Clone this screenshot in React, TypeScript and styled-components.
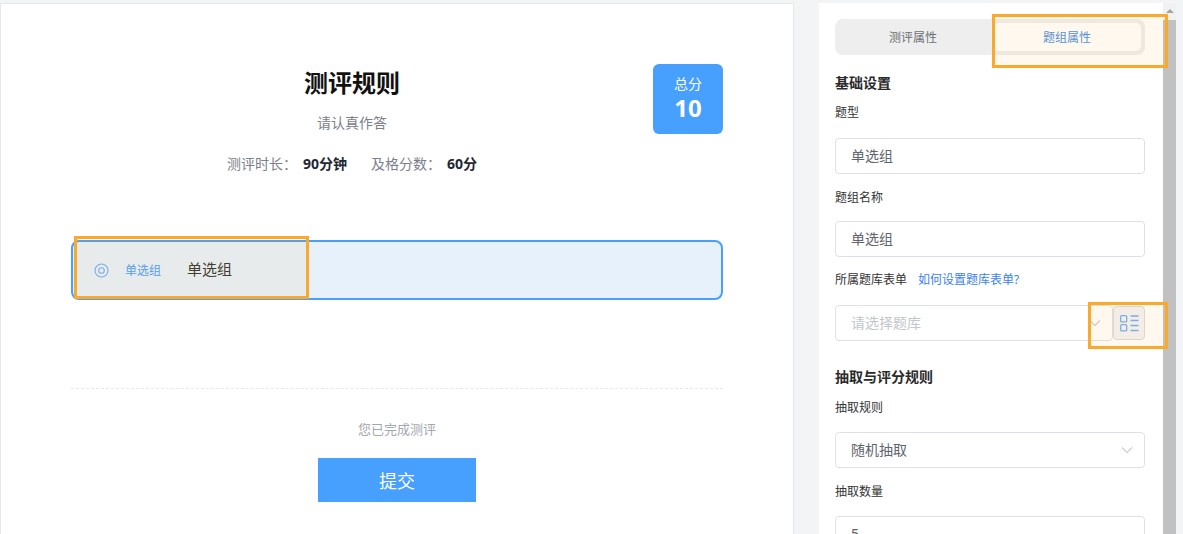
import React from "react";
import styled, { createGlobalStyle } from "styled-components";

const Global = createGlobalStyle`
  html, body { margin: 0; padding: 0; background: #f3f4f6; }
  * { box-sizing: border-box; }
  body { font-family: "Noto Sans", "Noto Sans CJK SC", sans-serif; overflow: hidden; }
`;

const Page = styled.div`
  position: relative;
  width: 1183px;
  height: 534px;
  overflow: hidden;
  display: flex;
  align-items: stretch;
  padding-top: 3px;
  background: #f3f4f6;
`;

const Preview = styled.main`
  width: 794px;
  margin-right: 25px;
  flex: none;
  background: #fff;
  border: 1px solid #e6e7ea;
  border-bottom: none;
  padding: 60px 70px 0;
`;

const Header = styled.header`
  display: flex;
  gap: 20px;
  height: 70px;
`;

const HeaderText = styled.div`
  flex: 1;
  text-align: center;
`;

const Title = styled.h1`
  margin: 2px 0 0;
  font-size: 24px;
  line-height: 34px;
  font-weight: 700;
  color: #111;
`;

const Subtitle = styled.p`
  margin: 13px 0 0;
  font-size: 14px;
  line-height: 20px;
  color: #7b808a;
`;

const Score = styled.div`
  width: 70px;
  height: 70px;
  flex: none;
  border-radius: 6px;
  background: #479ffe;
  color: #fff;
  display: flex;
  flex-direction: column;
  align-items: center;
  padding-top: 10px;
`;

const ScoreLabel = styled.span`
  font-size: 14px;
  line-height: 20px;
`;

const ScoreValue = styled.span`
  font-size: 24px;
  line-height: 28px;
  font-weight: 700;
`;

const InfoRow = styled.div`
  display: flex;
  justify-content: center;
  gap: 24px;
  width: 562px;
  margin-top: 20px;
  font-size: 14px;
  line-height: 20px;
`;

const InfoItem = styled.span`
  display: flex;
  gap: 6px;
  color: #7b808a;
`;

const InfoValue = styled.b`
  color: #1f2733;
  font-weight: 700;
`;

const QuestionRow = styled.div`
  margin-top: 66px;
  height: 60px;
  border: 2px solid #479ffe;
  border-radius: 8px;
  background: #e6f1fc;
  display: flex;
  align-items: center;
  padding-left: 21px;
`;

const TypeTag = styled.span`
  margin-left: 16px;
  width: 62px;
  font-size: 12px;
  color: #479ffe;
`;

const QuestionName = styled.span`
  font-size: 15px;
  padding-bottom: 3px;
  color: #333;
`;

const Divider = styled.hr`
  margin: 88px 0 0;
  border: none;
  border-top: 1px dashed #e6e8eb;
`;

const Footer = styled.div`
  display: flex;
  flex-direction: column;
  align-items: center;
`;

const Done = styled.p`
  margin: 30px 0 0;
  font-size: 13px;
  line-height: 20px;
  color: #a3a7b0;
`;

const Submit = styled.button`
  margin-top: 19px;
  width: 158px;
  height: 44px;
  border: none;
  background: #479ffe;
  color: #fff;
  font-family: inherit;
  font-size: 18px;
  padding: 0;
`;

const Side = styled.aside`
  width: 344px;
  flex: none;
  background: #fff;
  padding: 16px 18px 0 16px;
`;

const Tabs = styled.div`
  display: flex;
  height: 36px;
  padding: 4px;
  border-radius: 8px;
  background: #eeeeee;
`;

const Tab = styled.div<{ $active?: boolean }>`
  display: flex;
  align-items: center;
  justify-content: center;
  border-radius: 5px;
  font-size: 12px;
  ${(p) => (p.$active ? "width: 148px; flex: none;" : "flex: 1; padding-right: 6px;")}
  background: ${(p) => (p.$active ? "#fff" : "transparent")};
  color: ${(p) => (p.$active ? "#4a90e8" : "#6b6f76")};
`;

const SectionTitle = styled.h2<{ $top: number }>`
  margin: ${(p) => p.$top}px 0 0;
  font-size: 14px;
  line-height: 20px;
  font-weight: 700;
  color: #2a2a2a;
`;

const Label = styled.div<{ $top: number }>`
  margin-top: ${(p) => p.$top}px;
  padding-top: 2px;
  font-size: 12px;
  line-height: 16px;
  color: #333;
  display: flex;
  gap: 11px;
`;

const HelpLink = styled.a`
  color: #3b7ff5;
`;

const Field = styled.div<{ $top: number }>`
  margin-top: ${(p) => p.$top}px;
  height: 36px;
  flex: 1;
  min-width: 0;
  border: 1px solid #dfe1e8;
  border-radius: 4px;
  display: flex;
  align-items: center;
  justify-content: space-between;
  padding: 0 10px 2px 15px;
  font-size: 14px;
  color: #60646c;
`;

const Placeholder = styled.span`
  color: #c3c6cc;
`;

const FieldGroup = styled.div`
  display: flex;
  margin-top: 17px;
  height: 36px;
`;

const IconButton = styled.button`
  width: 32px;
  flex: none;
  height: 34px;
  margin-top: 1px;
  padding: 0;
  border: 1px solid #d8dae0;
  border-radius: 4px;
  background: #f3f4f7;
  display: flex;
  align-items: center;
  justify-content: center;
`;

const Scrollbar = styled.div`
  width: 13px;
  flex: none;
  background: #f1f1f1;
  display: flex;
  flex-direction: column;
  align-items: center;
`;

const ScrollArrow = styled.div`
  width: 0;
  height: 0;
  margin-top: 6px;
  border-left: 4px solid transparent;
  border-right: 4px solid transparent;
  border-bottom: 4px solid #a3a3a3;
`;

const ScrollThumb = styled.div`
  width: 100%;
  flex: 1;
  margin-top: 7px;
  background: #c1c1c1;
`;

const Highlight = styled.div<{ $x: number; $y: number; $w: number; $h: number }>`
  position: absolute;
  left: ${(p) => p.$x}px;
  top: ${(p) => p.$y}px;
  width: ${(p) => p.$w}px;
  height: ${(p) => p.$h}px;
  border: 3px solid #faa92a;
  background: rgba(250, 170, 40, 0.08);
  pointer-events: none;
`;

const Chevron = () => (
  <svg width="14" height="14" viewBox="0 0 14 14" fill="none">
    <path d="M2 5.500 7 10.500 12 5.500" stroke="#c9ccd2" strokeWidth="1.1" />
  </svg>
);

const TargetIcon = () => (
  <svg width="15" height="15" viewBox="0 0 15 15" fill="none" stroke="#6eb0f6">
    <circle cx="7.5" cy="7.5" r="6.5" strokeWidth="1.1" />
    <circle cx="7.5" cy="7.5" r="2.8" strokeWidth="1.1" />
  </svg>
);

const ListIcon = () => (
  <svg width="19" height="17" viewBox="0 0 19 17" fill="none" stroke="#6eb0f6" strokeWidth="1.3">
    <rect x="0.7" y="0.7" width="6" height="6.200" rx="1" />
    <rect x="0.7" y="9.700" width="6" height="6.200" rx="1" />
    <path d="M10.500 1h8M10.500 5.500h8M10.500 10.500h8M10.500 15.500h8" />
  </svg>
);

export default function App() {
  return (
    <Page>
      <Global />
      <Preview>
        <Header>
          <HeaderText>
            <Title>测评规则</Title>
            <Subtitle>请认真作答</Subtitle>
          </HeaderText>
          <Score>
            <ScoreLabel>总分</ScoreLabel>
            <ScoreValue>10</ScoreValue>
          </Score>
        </Header>
        <InfoRow>
          <InfoItem>
            <span>测评时长：</span>
            <InfoValue>90分钟</InfoValue>
          </InfoItem>
          <InfoItem>
            <span>及格分数：</span>
            <InfoValue>60分</InfoValue>
          </InfoItem>
        </InfoRow>
        <QuestionRow>
          <TargetIcon />
          <TypeTag>单选组</TypeTag>
          <QuestionName>单选组</QuestionName>
        </QuestionRow>
        <Divider />
        <Footer>
          <Done>您已完成测评</Done>
          <Submit>提交</Submit>
        </Footer>
      </Preview>
      <Side>
        <Tabs>
          <Tab>测评属性</Tab>
          <Tab $active>题组属性</Tab>
        </Tabs>
        <SectionTitle $top={18}>基础设置</SectionTitle>
        <Label $top={10}>题型</Label>
        <Field $top={17}>单选组</Field>
        <Label $top={14}>题组名称</Label>
        <Field $top={15}>单选组</Field>
        <Label $top={13}>
          <span>所属题库表单</span>
          <HelpLink>如何设置题库表单?</HelpLink>
        </Label>
        <FieldGroup>
          <Field $top={0}>
            <Placeholder>请选择题库</Placeholder>
            <Chevron />
          </Field>
          <IconButton>
            <ListIcon />
          </IconButton>
        </FieldGroup>
        <SectionTitle $top={26}>抽取与评分规则</SectionTitle>
        <Label $top={11}>抽取规则</Label>
        <Field $top={16}>
          随机抽取
          <Chevron />
        </Field>
        <Label $top={14}>抽取数量</Label>
        <Field $top={16}>5</Field>
      </Side>
      <Scrollbar>
        <ScrollArrow />
        <ScrollThumb />
      </Scrollbar>
      <Highlight $x={74} $y={236} $w={235} $h={63} />
      <Highlight $x={992} $y={14} $w={176} $h={54} />
      <Highlight $x={1088} $y={302} $w={80} $h={47} />
    </Page>
  );
}
